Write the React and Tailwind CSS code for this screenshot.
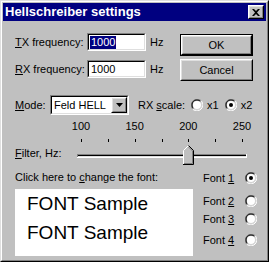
import React from 'react';

const raised = "border border-t-white border-l-white border-r-black border-b-black";
const raisedInner = "border border-t-[#dfdfdf] border-l-[#dfdfdf] border-r-[#808080] border-b-[#808080]";
const sunken = "border border-t-[#808080] border-l-[#808080] border-r-white border-b-white";
const sunkenInner = "border border-t-black border-l-black border-r-[#dfdfdf] border-b-[#dfdfdf]";

const Radio = ({ checked }) => (
    <svg width="12" height="12" viewBox="0 0 12 12" className="shrink-0">
        <path d="M1.76 10.24 A6 6 0 0 1 10.24 1.76" fill="none" stroke="#808080" strokeWidth="1" />
        <path d="M10.24 1.76 A6 6 0 0 1 1.76 10.24" fill="none" stroke="#ffffff" strokeWidth="1" />
        <path d="M2.46 9.54 A5 5 0 0 1 9.54 2.46" fill="none" stroke="#000000" strokeWidth="1" />
        <path d="M9.54 2.46 A5 5 0 0 1 2.46 9.54" fill="none" stroke="#dfdfdf" strokeWidth="1" />
        <circle cx="6" cy="6" r="4" fill="#ffffff" />
        {checked && <circle cx="6" cy="6" r="2" fill="#000000" />}
    </svg>
);

const Mn = ({ children }) => <span className="underline underline-offset-[1px]">{children}</span>;

const Slider = () => {
    const ticks = [9, 36, 63, 90, 116, 143, 170];
    return (
        <svg width="180" height="30" viewBox="0 0 180 30">
            {ticks.map((x) => (
                <rect key={x} x={x} y="3" width="1" height="3" fill="#000" />
            ))}
            {/* track */}
            <rect x="5" y="18" width="170" height="1" fill="#808080" />
            <rect x="5" y="18" width="1" height="4" fill="#808080" />
            <rect x="6" y="19" width="168" height="1" fill="#000" />
            <rect x="6" y="19" width="1" height="2" fill="#000" />
            <rect x="6" y="20" width="168" height="1" fill="#dfdfdf" />
            <rect x="5" y="21" width="170" height="1" fill="#fff" />
            <rect x="174" y="18" width="1" height="4" fill="#fff" />
            {/* thumb */}
            <path d="M111 14 L116 9 L122 15 L122 29 L111 29 Z" fill="#c0c0c0" />
            <path d="M111.5 28.5 L111.5 14.5 L116.5 9.5" fill="none" stroke="#fff" />
            <path d="M116.5 9.5 L121.5 14.5 L121.5 28.5 L111 28.5" fill="none" stroke="#000" />
            <path d="M116.5 11 L120.5 15 L120.5 27.5 L112 27.5" fill="none" stroke="#808080" />
        </svg>
    );
};

export default function App() {
    return (
        <div className="w-[269px] h-[262px] bg-[#c0c0c0] text-[11px] leading-[13px] text-black font-['Liberation_Sans',Arial,sans-serif] border border-t-[#dfdfdf] border-l-[#dfdfdf] border-r-black border-b-black overflow-hidden">
            <div className="h-full border border-t-white border-l-white border-r-[#808080] border-b-[#808080] p-px">
                {/* Title bar */}
                <div className="h-[18px] bg-[#000080] flex items-center justify-between pl-[2px] pr-[2px]">
                    <span className="text-white font-bold text-[13px] leading-[16px]">Hellschreiber settings</span>
                    <div className={`w-[16px] h-[14px] bg-[#c0c0c0] ${raised}`}>
                        <div className={`w-full h-full ${raisedInner} flex items-center justify-center`}>
                            <svg width="8" height="7" viewBox="0 0 8 7">
                                <path d="M0 0h2l2 2 2-2h2v0L5 3.5 8 7H6L4 5 2 7H0l3-3.5z" fill="#000" />
                            </svg>
                        </div>
                    </div>
                </div>

                <div className="pl-[12px]">
                    {/* Frequencies + buttons */}
                    <div className="flex mt-[12px]">
                        <div className="flex flex-col w-[165px]">
                            <div className="flex items-center h-[18px]">
                                <span className="w-[72px]"><Mn>T</Mn>X frequency:</span>
                                <div className={`w-[59px] h-[18px] bg-white ${sunken}`}>
                                    <div className={`h-full ${sunkenInner} flex items-center pl-[1px]`}>
                                        <span className="bg-[#000080] text-white px-px leading-[13px]">1000</span>
                                    </div>
                                </div>
                                <span className="ml-[4px]">Hz</span>
                            </div>
                            <div className="flex items-center h-[18px] mt-[9px]">
                                <span className="w-[72px]"><Mn>R</Mn>X frequency:</span>
                                <div className={`w-[59px] h-[18px] bg-white ${sunken}`}>
                                    <div className={`h-full ${sunkenInner} flex items-center pl-[2px]`}>
                                        <span>1000</span>
                                    </div>
                                </div>
                                <span className="ml-[4px]">Hz</span>
                            </div>
                        </div>
                        <div className="flex flex-col mt-[1px] w-[73px]">
                            <div className="h-[22px] border border-black">
                                <div className={`h-full ${raised}`}>
                                    <div className={`h-full ${raisedInner} flex items-center justify-center`}>OK</div>
                                </div>
                            </div>
                            <div className={`h-[22px] mt-[3px] ${raised}`}>
                                <div className={`h-full ${raisedInner} flex items-center justify-center`}>Cancel</div>
                            </div>
                        </div>
                    </div>

                    {/* Mode row */}
                    <div className="flex items-center mt-[14px] h-[20px]">
                        <span className="w-[35px]"><Mn>M</Mn>ode:</span>
                        <div className={`w-[79px] h-[20px] bg-white ${sunken}`}>
                            <div className={`h-full ${sunkenInner} flex items-center justify-between`}>
                                <span className="pl-[2px]">Feld HELL</span>
                                <div className={`w-[16px] h-[16px] bg-[#c0c0c0] ${raised}`}>
                                    <div className={`h-full ${raisedInner} flex items-center justify-center`}>
                                        <svg width="7" height="4" viewBox="0 0 7 4">
                                            <path d="M0 0h7L3.5 4z" fill="#000" />
                                        </svg>
                                    </div>
                                </div>
                            </div>
                        </div>
                        <span className="ml-[9px]">RX <Mn>s</Mn>cale:</span>
                        <div className="flex items-center ml-[6px] gap-[4px]">
                            <Radio />
                            <span>x1</span>
                        </div>
                        <div className="flex items-center ml-[6px] gap-[4px]">
                            <Radio checked />
                            <span>x2</span>
                        </div>
                    </div>

                    {/* Slider labels */}
                    <div className="flex justify-between ml-[56px] w-[181px] mt-[5px]">
                        {['100', '150', '200', '250'].map((t) => (
                            <span key={t} className="w-[20px] text-center">{t}</span>
                        ))}
                    </div>

                    {/* Filter slider */}
                    <div className="flex items-center mt-[3px]">
                        <span className="w-[57px] mt-[4px]"><Mn>F</Mn>ilter, Hz:</span>
                        <Slider />
                    </div>

                    {/* Font area */}
                    <div className="flex mt-[5px]">
                        <div className="flex flex-col w-[178px]">
                            <span className="h-[14px]">Click here to <Mn>c</Mn>hange the font:</span>
                            <div className="mt-[4px] h-[67px] bg-white flex flex-col pl-[12px] pt-[4px] gap-[7px] text-[19px] leading-[22px]">
                                <span>FONT Sample</span>
                                <span>FONT Sample</span>
                            </div>
                        </div>
                        <div className="flex flex-col ml-[10px] w-[54px]">
                            {[['1', true, 0], ['2', false, 9], ['3', false, 4], ['4', false, 7]].map(([n, c, m]) => (
                                <div key={n} className="flex items-center justify-between h-[14px]" style={{ marginTop: m }}>
                                    <span>Font <Mn>{n}</Mn></span>
                                    <Radio checked={c} />
                                </div>
                            ))}
                        </div>
                    </div>
                </div>
            </div>
        </div>
    );
}
